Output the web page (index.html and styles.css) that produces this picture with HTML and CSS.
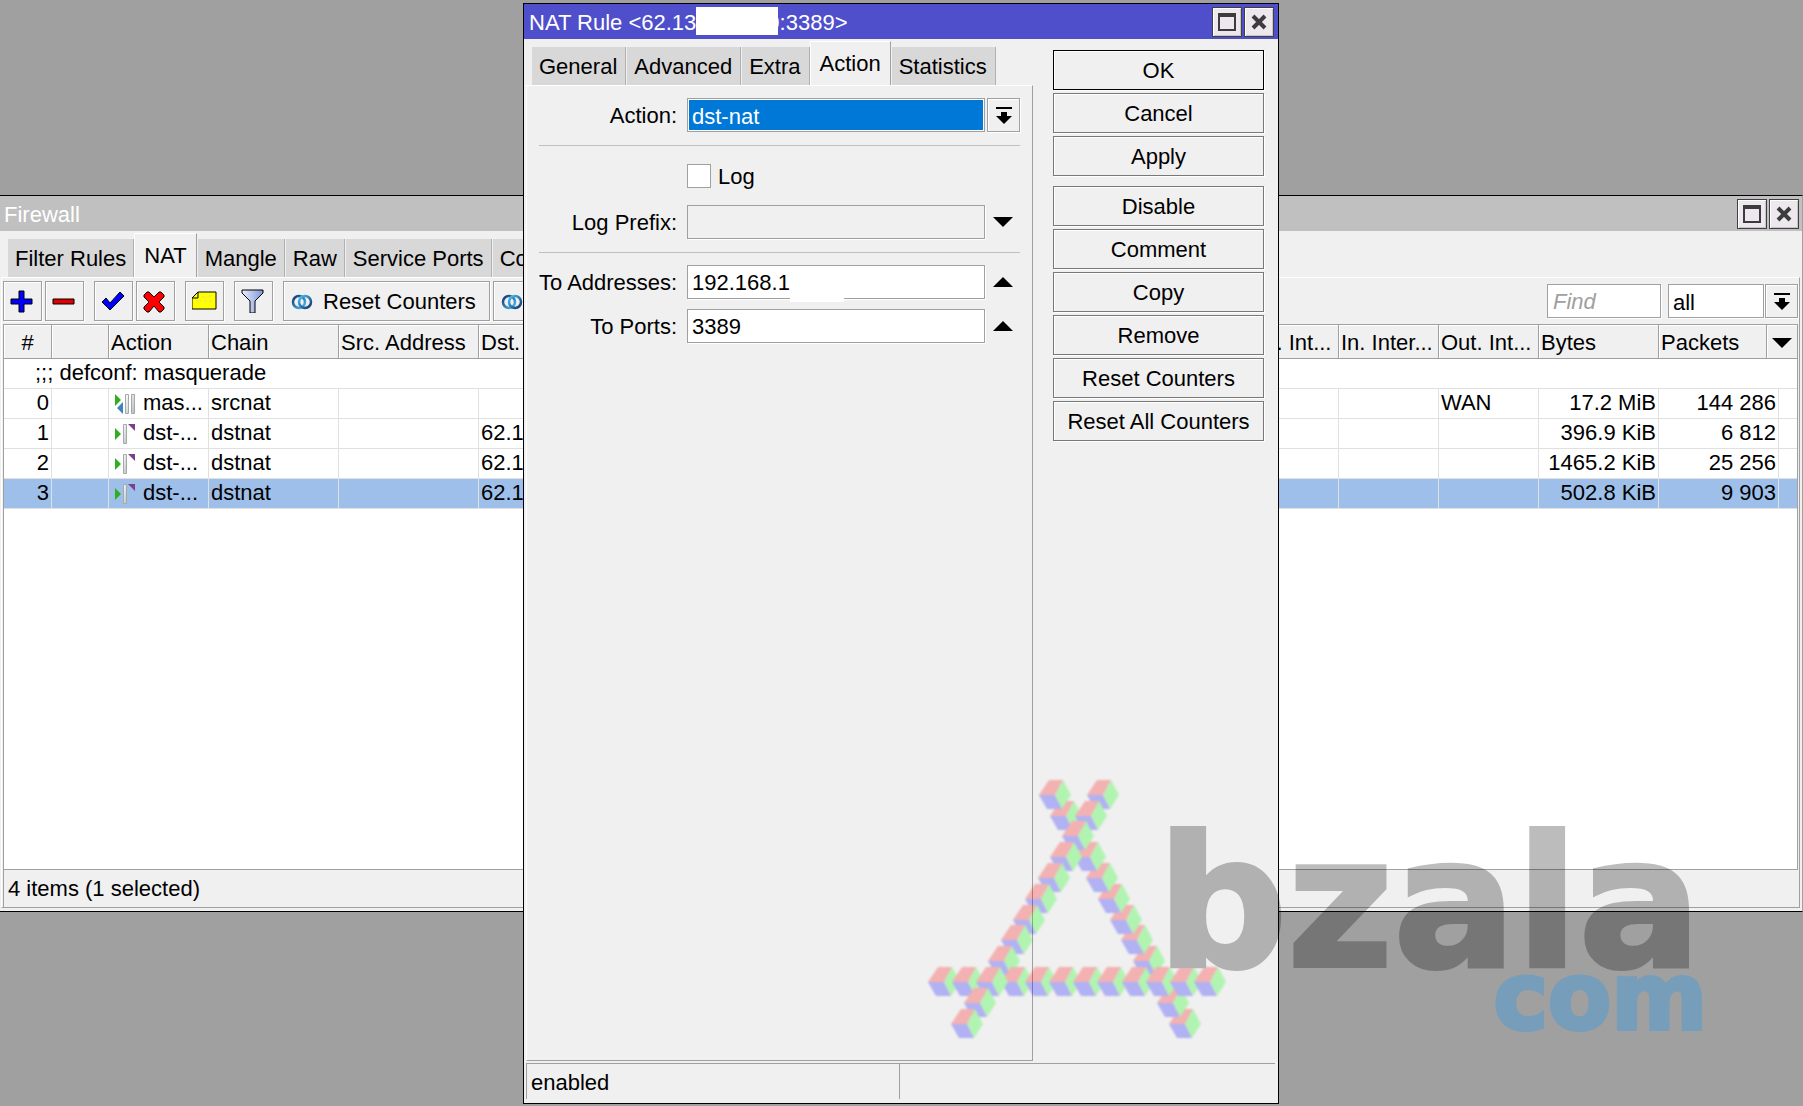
FILE: index.html
```html
<!DOCTYPE html>
<html lang="en">
<head>
    <meta charset="UTF-8">
    <meta name="viewport" content="width=device-width, initial-scale=1.0">
    <title>NAT Rule</title>
    <link rel="stylesheet" href="styles.css">
</head>

<body>
    <!-- shared icons -->
    <svg class="defs" width="0" height="0" aria-hidden="true">
        <defs>
            <linearGradient id="barFill" x1="0" y1="0" x2="1" y2="1">
                <stop offset="0" stop-color="#fff"/>
                <stop offset="1" stop-color="#b4bebe"/>
            </linearGradient>
            <linearGradient id="funnelFill" x1="0" y1="0" x2="1" y2="0">
                <stop offset="0" stop-color="#e8eeff"/>
                <stop offset="1" stop-color="#7f95d8"/>
            </linearGradient>
            <linearGradient id="ringA" x1="0" y1="0" x2="1" y2="1">
                <stop offset="0" stop-color="#12336e"/>
                <stop offset="1" stop-color="#4cc4f4"/>
            </linearGradient>
            <linearGradient id="ringB" x1="0" y1="0" x2="1" y2="1">
                <stop offset="0" stop-color="#4cc4f4"/>
                <stop offset="1" stop-color="#12336e"/>
            </linearGradient>
            <symbol id="maximize" viewBox="0 0 18 18">
                <path d="M0 0h18v18H0zM2 4v12h14V4z" fill="#3c3c3c" fill-rule="evenodd"/>
            </symbol>
            <symbol id="close" viewBox="0 0 18 18">
                <path d="M3 3l12 12M15 3L3 15" stroke="#3c3c3c" stroke-width="4"/>
            </symbol>
            <symbol id="dropdown" viewBox="0 0 16 18">
                <path d="M0 1h16v2H0zM5 6h6v4h5l-8 8-8-8h5z"/>
            </symbol>
            <symbol id="down" viewBox="0 0 20 10">
                <path d="M0 0h20L10 10z"/>
            </symbol>
            <symbol id="up" viewBox="0 0 20 10">
                <path d="M0 10h20L10 0z"/>
            </symbol>
            <symbol id="counters" viewBox="0 0 22 18">
                <circle cx="8" cy="9" r="6" fill="none" stroke="url(#ringA)" stroke-width="2.500"/>
                <circle cx="14" cy="9" r="6" fill="none" stroke="url(#ringB)" stroke-width="2.500"/>
            </symbol>
            <symbol id="masquerade" viewBox="0 0 20 20">
                <path d="M0 0l6 6-6 6z" fill="#2fae1f"/>
                <path d="M8 8v12l-6-6z" fill="#3a86b8"/>
                <path d="M10.500 .5h3v19h-3zM16.500 .5h3v19h-3z" fill="url(#barFill)" stroke="#a4aaaa"/>
            </symbol>
            <symbol id="dstnat" viewBox="0 0 20 20">
                <path d="M0 4l6 6-6 6z" fill="#2fae1f"/>
                <path d="M8.500 .5h3v19h-3z" fill="url(#barFill)" stroke="#a4aaaa"/>
                <path d="M13 0h7v7z" fill="#7c3f8c"/>
            </symbol>
            <g id="cube">
                <path d="M0 0l10-15h14L16 0z" fill="#f00"/>
                <path d="M0 0h16l7 14H8z" fill="#00f"/>
                <path d="M24-15L32 0l-9 14L16 0z" fill="#0f0"/>
            </g>
        </defs>
    </svg>

    <div class="desktop">
        <section class="window firewall">
            <header class="titlebar">
                <h2>Firewall</h2>
                <button class="title-btn" aria-label="Maximize"><svg width="18" height="18"><use href="#maximize"/></svg></button>
                <button class="title-btn" aria-label="Close"><svg width="18" height="18"><use href="#close"/></svg></button>
            </header>
            <nav class="tabs">
                <button class="tab">Filter Rules</button>
                <button class="tab active">NAT</button>
                <button class="tab">Mangle</button>
                <button class="tab">Raw</button>
                <button class="tab">Service Ports</button>
                <button class="tab">Connections</button>
            </nav>
            <div class="sheet">
                <div class="toolbar">
                    <div class="group">
                        <button class="tool" aria-label="Add">
                            <svg width="24" height="24" viewBox="0 0 24 24"><path d="M9 2h5v8h8v5h-8v8H9v-8H1v-5h8z" fill="#00f" stroke="#000"/></svg>
                        </button>
                        <button class="tool" aria-label="Remove">
                            <svg width="24" height="24" viewBox="0 0 24 24"><path d="M1 10h21v5H1z" fill="#e00000" stroke="#000"/></svg>
                        </button>
                    </div>
                    <div class="group">
                        <button class="tool" aria-label="Enable">
                            <svg width="24" height="24" viewBox="0 0 24 24"><path d="M1 13l4-4 4 5L19 3l4 4L9 21z" fill="#00f" stroke="#000"/></svg>
                        </button>
                        <button class="tool" aria-label="Disable">
                            <svg width="24" height="24" viewBox="1 0 24 24"><path d="M2 6l3-3 2 0 5 5 5-5h2l3 3v2l-5 5 5 5v2l-3 3h-2l-5-6-5 6H5l-3-3v-2l5-5-5-5z" fill="#f00" stroke="#000"/></svg>
                        </button>
                    </div>
                    <div class="group">
                        <button class="tool" aria-label="Comment">
                            <svg width="26" height="24" viewBox="0 0 26 24"><path d="M6 3h18v17H0V9z" fill="#ff0" stroke="#000"/><path d="M6 3v6H0" fill="none" stroke="#000"/><path d="M10 8h3M15 7h4M5 12h4M12 12h3M17 12h3" stroke="#dede7a"/></svg>
                        </button>
                    </div>
                    <div class="group">
                        <button class="tool" aria-label="Filter">
                            <svg width="24" height="24" viewBox="0 0 24 24"><path d="M1 1h21v3l-8 8v12H9V12L1 4z" fill="url(#funnelFill)" stroke="#000"/></svg>
                        </button>
                    </div>
                    <div class="group">
                        <button class="tool wide"><svg width="22" height="18"><use href="#counters"/></svg>Reset Counters</button>
                        <button class="tool wide"><svg width="22" height="18"><use href="#counters"/></svg>Reset All Counters</button>
                    </div>
                    <div class="search">
                        <input class="field find" type="text" placeholder="Find" aria-label="Find">
                        <select class="field scope" aria-label="Chain"><option>all</option></select>
                        <button class="drop" aria-label="Choose chain"><svg width="16" height="18"><use href="#dropdown"/></svg></button>
                    </div>
                </div>
                <div class="list">
                    <table class="rules">
                        <colgroup>
                            <col class="w-num"><col class="w-flag"><col class="w-md"><col class="w-chain"><col class="w-addr">
                            <col><col class="w-md"><col class="w-md"><col class="w-md"><col class="w-lg"><col class="w-pack"><col class="w-gap"><col class="w-end">
                        </colgroup>
                        <thead>
                            <tr>
                                <th class="center">#</th>
                                <th></th>
                                <th>Action</th>
                                <th>Chain</th>
                                <th>Src. Address</th>
                                <th>Dst. Address</th>
                                <th>Out. Int...</th>
                                <th>In. Inter...</th>
                                <th>Out. Int...</th>
                                <th>Bytes</th>
                                <th>Packets</th>
                                <th class="more" colspan="2"><button class="arrow" aria-label="Columns"><svg width="20" height="10"><use href="#down"/></svg></button></th>
                            </tr>
                        </thead>
                        <tbody>
                            <tr>
                                <td class="note" colspan="13">;;; defconf: masquerade</td>
                            </tr>
                            <tr>
                                <td class="num">0</td><td></td>
                                <td class="act"><svg width="20" height="20"><use href="#masquerade"/></svg>mas...</td>
                                <td>srcnat</td><td></td><td></td><td></td><td></td><td>WAN</td>
                                <td class="num">17.2 MiB</td><td class="num" colspan="2">144 286</td><td></td>
                            </tr>
                            <tr>
                                <td class="num">1</td><td></td>
                                <td class="act"><svg width="20" height="20"><use href="#dstnat"/></svg>dst-...</td>
                                <td>dstnat</td><td></td><td>62.1</td><td></td><td></td><td></td>
                                <td class="num">396.9 KiB</td><td class="num" colspan="2">6 812</td><td></td>
                            </tr>
                            <tr>
                                <td class="num">2</td><td></td>
                                <td class="act"><svg width="20" height="20"><use href="#dstnat"/></svg>dst-...</td>
                                <td>dstnat</td><td></td><td>62.1</td><td></td><td></td><td></td>
                                <td class="num">1465.2 KiB</td><td class="num" colspan="2">25 256</td><td></td>
                            </tr>
                            <tr class="selected">
                                <td class="num">3</td><td></td>
                                <td class="act"><svg width="20" height="20"><use href="#dstnat"/></svg>dst-...</td>
                                <td>dstnat</td><td></td><td>62.1</td><td></td><td></td><td></td>
                                <td class="num">502.8 KiB</td><td class="num" colspan="2">9 903</td><td></td>
                            </tr>
                        </tbody>
                    </table>
                </div>
                <footer class="summary">4 items (1 selected)</footer>
            </div>
        </section>

        <section class="window rule">
            <header class="titlebar">
                <h2>NAT Rule &lt;62.13<span class="blank"></span><span class="tail">0</span>:3389&gt;</h2>
                <button class="title-btn" aria-label="Maximize"><svg width="18" height="18"><use href="#maximize"/></svg></button>
                <button class="title-btn" aria-label="Close"><svg width="18" height="18"><use href="#close"/></svg></button>
            </header>
            <div class="body">
                <div class="pages">
                    <nav class="tabs">
                        <button class="tab">General</button>
                        <button class="tab">Advanced</button>
                        <button class="tab">Extra</button>
                        <button class="tab active">Action</button>
                        <button class="tab">Statistics</button>
                    </nav>
                    <form class="form">
                        <div class="row">
                            <label for="action">Action:</label>
                            <select class="field picked" id="action"><option>dst-nat</option></select>
                            <button class="drop" type="button" aria-label="Choose action"><svg width="16" height="18"><use href="#dropdown"/></svg></button>
                        </div>
                        <hr>
                        <div class="row check">
                            <input type="checkbox" id="log">
                            <label for="log">Log</label>
                        </div>
                        <div class="row">
                            <label for="prefix">Log Prefix:</label>
                            <input class="field off" type="text" id="prefix">
                            <button class="arrow" type="button" aria-label="Show log prefix"><svg width="20" height="10"><use href="#down"/></svg></button>
                        </div>
                        <hr>
                        <div class="row">
                            <label for="addresses">To Addresses:</label>
                            <div class="masked"><input class="field" type="text" id="addresses" value="192.168.1"></div>
                            <button class="arrow" type="button" aria-label="Hide to addresses"><svg width="20" height="10"><use href="#up"/></svg></button>
                        </div>
                        <div class="row">
                            <label for="ports">To Ports:</label>
                            <input class="field" type="text" id="ports" value="3389">
                            <button class="arrow" type="button" aria-label="Hide to ports"><svg width="20" height="10"><use href="#up"/></svg></button>
                        </div>
                    </form>
                </div>
                <div class="actions">
                    <div class="stack">
                        <button class="main">OK</button>
                        <button>Cancel</button>
                        <button>Apply</button>
                    </div>
                    <div class="stack">
                        <button>Disable</button>
                        <button>Comment</button>
                        <button>Copy</button>
                        <button>Remove</button>
                        <button>Reset Counters</button>
                        <button>Reset All Counters</button>
                    </div>
                </div>
            </div>
            <footer class="status">
                <span>enabled</span>
                <span></span>
            </footer>
        </section>

        <svg class="watermark" width="820" height="300" viewBox="0 0 820 300">
            <g class="cubes">
                <use href="#cube" x="269" y="264"/>
                <use href="#cube" x="257" y="243"/>
                <use href="#cube" x="233" y="201"/>
                <use href="#cube" x="221" y="180"/>
                <use href="#cube" x="210" y="160"/>
                <use href="#cube" x="198" y="139"/>
                <use href="#cube" x="186" y="118"/>
                <use href="#cube" x="174" y="97"/>
                <use href="#cube" x="150" y="56"/>
                <use href="#cube" x="139" y="35"/>
                <use href="#cube" x="187" y="35"/>
                <use href="#cube" x="175" y="56"/>
                <use href="#cube" x="162" y="76"/>
                <use href="#cube" x="150" y="97"/>
                <use href="#cube" x="138" y="118"/>
                <use href="#cube" x="125" y="139"/>
                <use href="#cube" x="113" y="160"/>
                <use href="#cube" x="101" y="180"/>
                <use href="#cube" x="88" y="201"/>
                <use href="#cube" x="28" y="222"/>
                <use href="#cube" x="52" y="222"/>
                <use href="#cube" x="101" y="222"/>
                <use href="#cube" x="125" y="222"/>
                <use href="#cube" x="149" y="222"/>
                <use href="#cube" x="173" y="222"/>
                <use href="#cube" x="197" y="222"/>
                <use href="#cube" x="222" y="222"/>
                <use href="#cube" x="246" y="222"/>
                <use href="#cube" x="270" y="222"/>
                <use href="#cube" x="294" y="222"/>
                <use href="#cube" x="76" y="222"/>
                <use href="#cube" x="64" y="243"/>
                <use href="#cube" x="51" y="264"/>
            </g>
            <text class="brand" x="257" y="206">bzala</text>
            <text class="domain" x="807" y="269" text-anchor="end">com</text>
        </svg>
    </div>
</body>
</html>
```
FILE: styles.css
```css
* {
    box-sizing: border-box;
}

body {
    margin: 0;
    font-family: "Liberation Sans", Arial, sans-serif;
    font-size: 22px;
    color: #000;
    background-color: #a0a0a0;
}

button, input, select {
    font: inherit;
    color: inherit;
    margin: 0;
    padding: 0;
    border-radius: 0;
}

svg {
    display: block;
    flex: none;
}

.defs {
    position: absolute;
}

.desktop {
    position: relative;
    height: 100vh;
    overflow: hidden;
}

/* windows */
.window {
    position: absolute;
    display: flex;
    flex-direction: column;
    background-color: #f0f0f0;
    border: 1px solid #000;
}

.firewall {
    top: 195px;
    left: -1px;
    right: 0;
    bottom: 194px;
    border-right-color: #a0a0a0;
}

.rule {
    top: 3px;
    left: 523px;
    width: 756px;
    bottom: 2px;
}

.titlebar {
    display: flex;
    align-items: center;
    gap: 2px;
    height: 35px;
    padding: 0 3px 0 4px;
    background-color: #c0c0c0;
    color: #fff;
}

.titlebar h2 {
    flex: 1;
    display: flex;
    align-items: center;
    margin: 0;
    padding-top: 3px;
    font-size: 22px;
    font-weight: normal;
    white-space: pre;
}

.rule .titlebar {
    padding: 0 4px 0 5px;
    background-color: #4f4fcb;
}

.blank {
    width: 82px;
    height: 28px;
    margin-top: -5px;
    background-color: #fff;
    z-index: 1;
}

.tail {
    margin-left: -11px;
}

.title-btn {
    display: flex;
    align-items: center;
    justify-content: center;
    width: 30px;
    height: 30px;
    background-color: #ece8ee;
    border: 1px solid #404040;
    box-shadow: inset 1px 1px #fff, inset -1px -1px #c8c4ca;
}

/* tabs */
.tabs {
    display: flex;
    align-items: flex-end;
    height: 46px;
    padding-left: 7px;
    overflow: hidden;
}

.tab {
    flex: none;
    height: 38px;
    padding: 2px 7px 0;
    border: 0;
    border-left: 1px solid #f0f0f0;
    border-right: 1px solid #b0b0b0;
    background-color: #d8d8d8;
}

.tab.active {
    height: 44px;
    padding: 0 9px;
    background-color: #f0f0f0;
    border-left: 1px solid #fff;
    border-top: 1px solid #fff;
    border-right-color: #a0a0a0;
}

/* firewall list */
.sheet {
    flex: 1;
    display: flex;
    flex-direction: column;
    min-height: 0;
    margin: 0 2px 3px 1px;
    padding: 3px 1px 0 1px;
    border: 1px solid #a0a0a0;
    border-top-color: #fff;
    border-left-color: #fff;
}

.toolbar {
    display: flex;
    align-items: center;
    gap: 10px;
    height: 40px;
    margin-bottom: 3px;
}

.group {
    display: flex;
    gap: 3px;
}

.tool {
    display: flex;
    align-items: center;
    gap: 10px;
    width: 39px;
    height: 40px;
    padding-left: 6px;
    background-color: #f0f0f0;
    border: 1px solid #a0a0a0;
    box-shadow: inset 1px 1px #fff, 1px 1px #fff;
}

.tool.wide {
    width: auto;
    padding: 2px 13px 0 7px;
    white-space: nowrap;
}

.search {
    display: flex;
    margin-left: auto;
}

.field {
    width: 100%;
    height: 34px;
    padding: 2px 4px 0;
    border: 1px solid #a0a0a0;
    background-color: #fff;
    box-shadow: 1px 1px #fff;
    appearance: none;
    outline: none;
}

.find {
    width: 114px;
    margin-right: 7px;
    padding-left: 5px;
}

.find::placeholder {
    color: #a0a0a0;
    font-style: italic;
    opacity: 1;
}

.scope {
    width: 96px;
}

.drop {
    display: flex;
    align-items: center;
    justify-content: center;
    width: 33px;
    height: 34px;
    margin-left: 1px;
    background-color: #f0f0f0;
    border: 1px solid #a0a0a0;
    box-shadow: inset 1px 1px #fff, 1px 1px #fff;
}

.list {
    flex: 1;
    min-height: 0;
    overflow: hidden;
    border: 1px solid #a0a0a0;
    background-color: #fff;
}

.rules {
    width: 100%;
    table-layout: fixed;
    border-collapse: separate;
    border-spacing: 0;
}

.w-num { width: 48px; }
.w-flag { width: 57px; }
.w-md { width: 100px; }
.w-chain { width: 130px; }
.w-addr { width: 140px; }
.w-lg { width: 120px; }
.w-pack { width: 108px; }
.w-gap { width: 12px; }
.w-end { width: 18px; }

.rules th {
    height: 34px;
    padding: 2px 2px 0;
    background-color: #f0f0f0;
    border-right: 1px solid #a0a0a0;
    border-bottom: 1px solid #a0a0a0;
    box-shadow: inset 1px 1px #fff;
    font-weight: normal;
    text-align: left;
    white-space: nowrap;
    overflow: hidden;
}

.rules th.center {
    text-align: center;
}

.rules th.more {
    padding-left: 5px;
    border-right: 0;
}

.rules td {
    height: 30px;
    padding: 1px 2px 2px;
    border-right: 1px solid #e0e0e0;
    border-bottom: 1px solid #e0e0e0;
    line-height: 26px;
    white-space: nowrap;
    overflow: hidden;
}

.rules td:last-child {
    border-right: 0;
}

.rules td.note {
    padding-left: 31px;
}

.rules td.num {
    text-align: right;
}

.rules td.act {
    padding-left: 6px;
}

.act svg {
    display: inline-block;
    margin-right: 8px;
    vertical-align: middle;
}

.selected td {
    background-color: #9dbfe9;
}

.summary {
    height: 37px;
    padding-left: 4px;
    border-left: 1px solid #a0a0a0;
    line-height: 38px;
}

/* rule dialog */
.body {
    flex: 1;
    display: flex;
    min-height: 0;
}

.pages {
    flex: 1;
    display: flex;
    flex-direction: column;
    margin-left: 2px;
}

.pages .tabs {
    padding-left: 5px;
}

.pages .tab {
    padding-right: 8px;
}

.pages .tab.active {
    padding: 0 9px;
}

.form {
    flex: 1;
    display: flex;
    flex-direction: column;
    gap: 10px;
    padding: 12px 12px 0;
    border: 1px solid #a0a0a0;
    border-top-color: #fff;
    border-left-color: #fff;
}

.row {
    display: grid;
    grid-template-columns: 147px 1fr 34px;
    align-items: center;
    column-gap: 1px;
}

.row > label {
    padding: 2px 9px 0 0;
    text-align: right;
    white-space: nowrap;
}

.form hr {
    width: 100%;
    height: 1px;
    margin: 3px 0 2px;
    border: 0;
    background-color: #c0c0c0;
}

.check {
    grid-template-columns: 24px auto;
    column-gap: 7px;
    justify-content: start;
    padding: 4px 0 5px 148px;
}

.check input {
    width: 24px;
    height: 24px;
    appearance: none;
    background-color: #fff;
    border: 1px solid #a0a0a0;
}

.picked {
    background-color: #0078d7;
    color: #fff;
    box-shadow: inset 0 0 0 1px #fff;
}

.off {
    background-color: #f0f0f0;
}

.arrow {
    display: flex;
    align-items: center;
    justify-content: center;
    width: 34px;
    height: 28px;
    border: 0;
    background: none;
}

.more .arrow {
    width: 20px;
}

/* blanked part of the address runs over the lower border */
.masked {
    position: relative;
}

.masked::after {
    content: "";
    position: absolute;
    left: 103px;
    bottom: -3px;
    width: 54px;
    height: 28px;
    background-color: #fff;
}

.actions {
    display: flex;
    flex-direction: column;
    gap: 10px;
    width: 245px;
    padding: 11px 14px 0 20px;
}

.stack {
    display: flex;
    flex-direction: column;
    gap: 3px;
}

.stack button {
    height: 40px;
    padding-top: 2px;
    background-color: #f0f0f0;
    border: 1px solid #787878;
    box-shadow: inset 1px 1px #fff, 1px 1px #fff;
}

.stack .main {
    border-color: #000;
}

.status {
    display: flex;
    height: 36px;
    margin: 2px 3px 4px 2px;
    line-height: 38px;
}

.status span {
    width: 373px;
    padding-left: 4px;
    border-top: 1px solid #a0a0a0;
    border-left: 1px solid #a0a0a0;
}

.status span:last-child {
    flex: 1;
}

/* logo laid over the whole desktop */
.watermark {
    position: absolute;
    left: 900px;
    top: 760px;
    opacity: 0.263;
    pointer-events: none;
}

.cubes {
    filter: blur(1px);
}

.brand,
.domain {
    font-family: "DejaVu Sans", sans-serif;
    font-weight: bold;
}

.brand {
    font-size: 182px;
    stroke: #000;
    stroke-width: 4px;
}

.domain {
    font-size: 92px;
    fill: #0096ff;
    stroke: #0096ff;
    stroke-width: 4px;
}
```
